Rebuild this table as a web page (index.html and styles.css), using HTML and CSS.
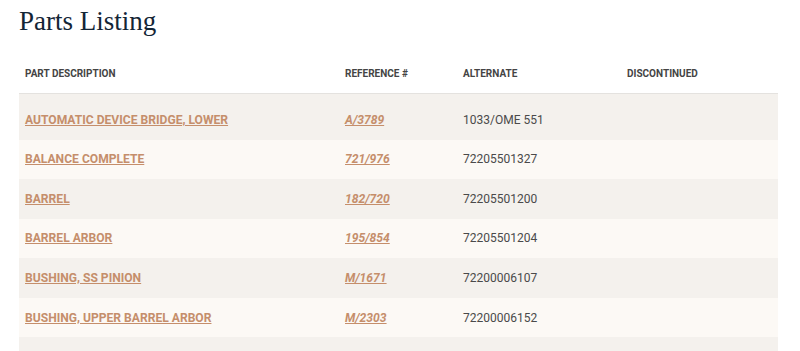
FILE: index.html
```html
<!DOCTYPE html>
<html>
<head>
<meta charset="utf-8">
<link rel="stylesheet" href="styles.css">
</head>
<body>
<h1 class="title">Parts Listing</h1>
<table class="parts">
  <thead>
    <tr>
      <th class="c1">Part Description</th>
      <th class="c2">Reference #</th>
      <th class="c3">Alternate</th>
      <th class="c4">Discontinued</th>
    </tr>
  </thead>
  <tbody>
    <tr class="first"><td><a href="#" class="name">Automatic Device Bridge, Lower</a></td><td><a href="#" class="ref">A/3789</a></td><td class="alt">1033/OME 551</td><td></td></tr>
    <tr><td><a href="#" class="name">Balance Complete</a></td><td><a href="#" class="ref">721/976</a></td><td class="alt">72205501327</td><td></td></tr>
    <tr><td><a href="#" class="name">Barrel</a></td><td><a href="#" class="ref">182/720</a></td><td class="alt">72205501200</td><td></td></tr>
    <tr><td><a href="#" class="name">Barrel Arbor</a></td><td><a href="#" class="ref">195/854</a></td><td class="alt">72205501204</td><td></td></tr>
    <tr><td><a href="#" class="name">Bushing, SS Pinion</a></td><td><a href="#" class="ref">M/1671</a></td><td class="alt">72200006107</td><td></td></tr>
    <tr><td><a href="#" class="name">Bushing, Upper Barrel Arbor</a></td><td><a href="#" class="ref">M/2303</a></td><td class="alt">72200006152</td><td></td></tr>
    <tr><td></td><td></td><td></td><td></td></tr>
  </tbody>
</table>
</body>
</html>
```
FILE: styles.css
```css
html, body {
  margin: 0;
  padding: 0;
  background: #ffffff;
}
body {
  padding: 0 22px 0 19px;
  font-family: Roboto, "Liberation Sans", sans-serif;
}
.title {
  margin: 0;
  padding-top: 4px;
  font-family: "Liberation Serif", "DejaVu Serif", serif;
  font-weight: normal;
  font-size: 27px;
  line-height: 34px;
  color: #132536;
}
.parts {
  width: 759px;
  margin-top: 22px;
  border-collapse: collapse;
}
.parts th {
  text-align: left;
  font-size: 10px;
  font-weight: 700;
  text-transform: uppercase;
  color: #444444;
  padding: 7px 6px 12px;
  border-bottom: 1px solid #e4e2df;
  line-height: 14px;
}
.c1 { width: 308px; }
.c2 { width: 106px; }
.c3 { width: 152px; }
.parts td {
  padding: 0 6px;
  height: 39.6px;
  vertical-align: middle;
  font-size: 12px;
}
.parts tbody tr:nth-child(odd) { background: #f4f1ed; }
.parts tbody tr:nth-child(even) { background: #fcf9f5; }
.parts tr.first td {
  height: 46px;
  padding-top: 6px;
  box-sizing: border-box;
}
.name, .ref {
  color: #c58e6b;
  font-weight: 700;
  font-size: 12.1px;
  text-transform: uppercase;
  text-decoration: underline;
}
.ref { font-style: italic; }
.alt {
  color: #4a4a4a;
}
```
